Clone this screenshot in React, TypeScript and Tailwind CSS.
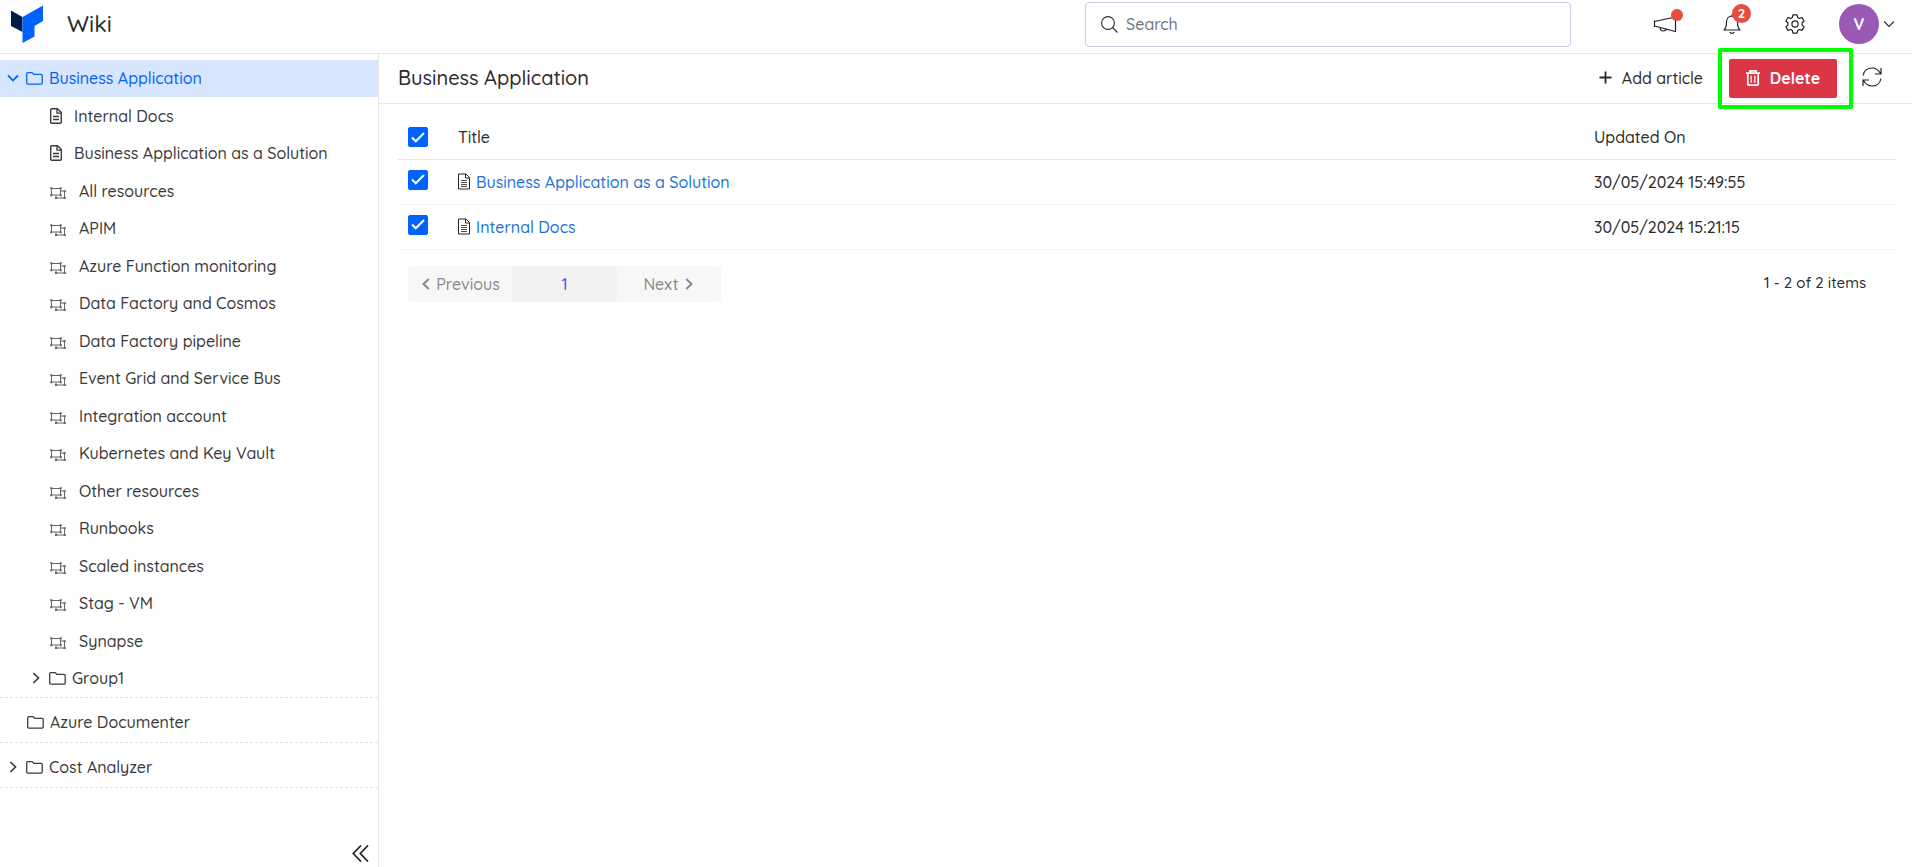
import { useState } from "react";
import type { ReactNode } from "react";

const resources = [
  "All resources",
  "APIM",
  "Azure Function monitoring",
  "Data Factory and Cosmos",
  "Data Factory pipeline",
  "Event Grid and Service Bus",
  "Integration account",
  "Kubernetes and Key Vault",
  "Other resources",
  "Runbooks",
  "Scaled instances",
  "Stag - VM",
  "Synapse",
];

const articles = [
  { title: "Business Application as a Solution", updatedOn: "30/05/2024 15:49:55" },
  { title: "Internal Docs", updatedOn: "30/05/2024 15:21:15" },
];

const Logo = () => (
  <svg width="32" height="38" viewBox="0 0 32 38" aria-hidden="true">
    <path d="M0 5.500 11.500 12V27L0 21Z" fill="#001d47" />
    <path d="M11.500 12 32 .500V16l-8.500 5v10.500L11.500 38Z" fill="#0062ff" />
  </svg>
);

const Chevron = ({ className = "stroke-[1.7]" }: { className?: string }) => (
  <svg width="12" height="12" viewBox="0 0 12 12" fill="none" stroke="currentColor" className={className}>
    <path d="M1 3.300 6 8.500 11 3.300" />
  </svg>
);

const FolderIcon = () => (
  <svg width="17" height="13" viewBox="0 0 17 13" fill="none" stroke="currentColor" className="shrink-0">
    <path
      d="M1.700.700h4.200c.4 0 .7.200.9.500l1 1.200h7.400c.6 0 1 .4 1 1v7.700c0 .6-.4 1-1 1H1.700c-.6 0-1-.4-1-1V1.700c0-.6.4-1 1-1Z"
      strokeWidth="1.300"
    />
  </svg>
);

const DocIcon = () => (
  <svg width="12" height="16" viewBox="0 0 12 16" fill="none" stroke="currentColor" className="shrink-0">
    <path d="M1.700.700h5.800l3.800 3.800v9.800c0 .6-.4 1-1 1H1.700c-.6 0-1-.4-1-1V1.700c0-.6.4-1 1-1Z" strokeWidth="1.400" />
    <path d="M7 1v4.200h4.200" strokeWidth="1.300" />
    <path d="M3 8.500h6M3 11.500h6" strokeWidth="1.300" />
  </svg>
);

const FileIcon = () => (
  <svg width="12" height="17" viewBox="0 0 12 17" fill="none" stroke="#222" className="shrink-0">
    <path d="M.5 1h7.500L11.500 4.500V16H.5Z" />
    <path d="M7.500 1v4h4" />
    <path d="M3 7.500h6M3 9.500h6M3 11.500h6M3 13.500h6" strokeWidth=".8" />
  </svg>
);

const ResourceIcon = () => (
  <svg width="16" height="12" viewBox="0 0 16 12" fill="none" stroke="#666" className="shrink-0">
    <path d="M1.500 1.500h9v6.500h-9Z" />
    <path d="M11 4h3.500v7H6V8.500" />
    <path
      d="M.2.200h2.100v2.100H.2ZM9.700.200h2.100v2.100H9.700ZM.2 7.200h2.100v2.100H.2ZM9.700 7.200h2.100v2.100H9.700ZM13.600 3.200h2.200v1.800H13.600ZM13.600 9.900h2.200v2H13.600ZM5 9.900h2.200v2H5Z"
      fill="#666"
      stroke="none"
    />
  </svg>
);

const SearchIcon = () => (
  <svg width="17" height="17" viewBox="0 0 17 17" fill="none" stroke="#333" className="shrink-0">
    <circle cx="7" cy="7" r="6.400" strokeWidth="1.100" />
    <path d="m11.500 11.500 5 5" strokeWidth="1.300" />
  </svg>
);

const MegaphoneIcon = () => (
  <svg width="24" height="18" viewBox="0 0 24 18" fill="none" stroke="#222" strokeWidth="1.200">
    <path d="M1.500 5.500v6.500M1.500 6.500 22.500 2v14.500L1.500 11M7 12.500c.2 2.300 1.500 3.500 3.300 3.500 1.600 0 2.800-.9 3.300-2" />
  </svg>
);

const BellIcon = () => (
  <svg width="18" height="20" viewBox="0 0 18 20" fill="none" stroke="#222" strokeWidth="1.200">
    <path d="M9 .500v1.700M1 16c1.700-1.500 2.500-3 2.500-8C3.500 4.500 6 2.200 9 2.200S14.500 4.500 14.500 8c0 5 .8 6.500 2.500 8Z" strokeLinejoin="round" />
    <path d="M6.700 18c.5.900 1.300 1.300 2.300 1.300s1.800-.4 2.300-1.300" />
  </svg>
);

const GearIcon = () => (
  <svg width="20" height="20" viewBox="0 0 20 20" fill="none" stroke="#222" strokeWidth="1.200" strokeLinejoin="round">
    <path d="M7.900.8h4.200l.5 2.600 1.800 1 2.600-.9 2.100 3.500-2 1.800v2.300l2 1.800-2.100 3.500-2.600-.9-1.800 1-.5 2.700H7.900l-.5-2.700-1.800-1-2.600.9L.9 12.900l2-1.800V8.800L.9 7 3 3.500l2.600.9 1.800-1Z" />
    <circle cx="10" cy="10" r="3.100" />
  </svg>
);

const RefreshIcon = () => (
  <svg width="20" height="20" viewBox="0 0 20 20" fill="none" stroke="#222" strokeWidth="1.200">
    <path d="M1 8.500C1.800 4 5.500 1 10 1c3.500 0 6.500 2 8.500 5.500M19 1v6h-6" />
    <path d="M19 11.500C18.200 16 14.500 19 10 19c-3.500 0-6.500-2-8.500-5.500M1 19v-6h6" />
  </svg>
);

const TrashIcon = () => (
  <svg width="14" height="16" viewBox="0 0 14 16" fill="none" stroke="currentColor">
    <path d="M0 3.200h14M4 3V.900h6V3M1.800 3.500v10.600c0 .7.400 1 1 1h8.400c.6 0 1-.3 1-1V3.500" strokeWidth="1.700" />
    <path d="M5.200 5.800v7M8.800 5.800v7" strokeWidth="1.300" />
  </svg>
);

const CollapseIcon = () => (
  <svg width="17" height="17" viewBox="0 0 17 17" fill="none" stroke="#222" strokeWidth="1.700">
    <path d="M9 .500 1.300 8.500l7.700 8M16 .500 8.300 8.500l7.700 8" />
  </svg>
);

const Checkbox = ({ label, checked, onChange }: { label: string; checked: boolean; onChange: () => void }) => (
  <span className="grid size-5 place-items-center">
    <input
      type="checkbox"
      aria-label={label}
      checked={checked}
      onChange={onChange}
      className="col-start-1 row-start-1 size-full appearance-none rounded-xs border border-gray-400 checked:border-[#0062ff] checked:bg-[#0062ff]"
    />
    <svg width="14" height="11" viewBox="0 0 14 11" fill="none" stroke="#fff" className="pointer-events-none col-start-1 row-start-1">
      <path d="m1 5.500 3.800 3.800L13 1" strokeWidth="2" />
    </svg>
  </span>
);

const TreeRow = ({ children, className = "" }: { children: ReactNode; className?: string }) => (
  <li className={`flex h-[37px] items-center pl-[50px] even:h-[38px] ${className}`}>{children}</li>
);

const Sidebar = () => (
  <aside className="flex w-[379px] shrink-0 flex-col border-r border-[#e6e6e6] pt-1.5">
    <nav className="font-medium text-[#3a3a3a]">
      <div className="border-b border-dashed border-[#e4e4e4]">
        <a href="#business" className="flex h-[37px] items-center bg-[#d8e5ff] pb-px pl-[7px] text-[#0062ff]">
          <Chevron />
          <span className="ml-[7px] flex items-center gap-1.5">
            <FolderIcon />
            Business Application
          </span>
        </a>
        <ul>
          {["Internal Docs", "Business Application as a Solution"].map((doc) => (
            <TreeRow key={doc}>
              <a href="#doc" className="flex items-center gap-3">
                <DocIcon />
                {doc}
              </a>
            </TreeRow>
          ))}
          {resources.map((name) => (
            <TreeRow key={name}>
              <a href="#resource" className="flex items-end gap-[13px]">
                <span className="pb-1">
                  <ResourceIcon />
                </span>
                {name}
              </a>
            </TreeRow>
          ))}
          <TreeRow className="-ml-5">
            <a href="#group1" className="flex items-center">
              <Chevron className="-rotate-90 stroke-[1.7]" />
              <span className="ml-[7px] flex items-center gap-1.5">
                <FolderIcon />
                Group1
              </span>
            </a>
          </TreeRow>
        </ul>
      </div>
      <a href="#azure" className="flex h-[45px] items-center gap-1.5 border-b border-dashed border-[#e4e4e4] pt-1 pl-[27px]">
        <FolderIcon />
        Azure Documenter
      </a>
      <a href="#cost" className="flex h-[45px] items-center border-b border-dashed border-[#e4e4e4] pt-1 pl-[7px]">
        <Chevron className="-rotate-90 stroke-[1.7]" />
        <span className="ml-[7px] flex items-center gap-1.5">
          <FolderIcon />
          Cost Analyzer
        </span>
      </a>
    </nav>
    <button type="button" aria-label="Collapse sidebar" className="mt-auto mr-[9px] mb-[5px] self-end">
      <CollapseIcon />
    </button>
  </aside>
);

const Header = () => (
  <header className="flex h-[54px] shrink-0 items-center border-b border-[#e6e6e6] pr-[17px] pb-[5px] pl-[11px]">
    <Logo />
    <h1 className="ml-6 text-[23px] leading-7 font-medium">Wiki</h1>
    <label className="ml-auto flex h-[45px] w-[486px] items-center gap-2 rounded-sm border border-[#cfcbe2] pl-[15px]">
      <SearchIcon />
      <input
        type="text"
        aria-label="Search"
        placeholder="Search"
        className="min-w-0 flex-1 font-medium outline-none placeholder:text-[#6c757d]"
      />
    </label>
    <div className="ml-[82px] flex items-center">
      <button type="button" aria-label="Announcements" className="relative">
        <MegaphoneIcon />
        <span className="absolute -top-1.5 -right-1.5 size-3 rounded-full bg-[#e74c3c]" />
      </button>
      <button type="button" aria-label="Notifications" className="relative ml-[46px]">
        <BellIcon />
        <span className="absolute -top-2.5 -right-2.5 size-[19px] rounded-full bg-[#e74c3c] text-[13px] leading-[19px] font-bold text-white">
          2
        </span>
      </button>
      <button type="button" aria-label="Settings" className="ml-11">
        <GearIcon />
      </button>
      <button type="button" aria-label="Account" className="ml-[34px] flex items-center gap-1">
        <span className="size-10 rounded-full bg-[#9b59b6] text-base leading-10 font-bold text-white">V</span>
        <Chevron className="stroke-[1.2]" />
      </button>
    </div>
  </header>
);

const Toolbar = () => (
  <div className="flex h-[50px] items-center border-b border-[#e6e6e6] pr-[30px] pl-[19px]">
    <h2 className="pb-0.5 text-xl leading-7 font-medium">Business Application</h2>
    <button type="button" className="ml-auto flex items-center gap-2.5 pb-0.5 font-medium">
      <svg width="13" height="13" viewBox="0 0 13 13" stroke="currentColor" strokeWidth="1.800">
        <path d="M6.500.500v12M.5 6.500h12" />
      </svg>
      Add article
    </button>
    <div className="relative ml-[26px]">
      <button
        type="button"
        className="flex h-[39px] w-[108px] items-center justify-center gap-2.5 rounded-xs bg-[#dc3545] pb-px font-bold text-white"
      >
        <TrashIcon />
        Delete
      </button>
      <span className="pointer-events-none absolute -top-[11px] -right-4 -bottom-[11px] -left-[11px] rounded-xs border-4 border-[#00ff00]" />
    </div>
    <button type="button" aria-label="Refresh" className="ml-[25px] pb-1">
      <RefreshIcon />
    </button>
  </div>
);

const ArticleTable = () => {
  const [selected, setSelected] = useState<string[]>(articles.map((a) => a.title));
  const allSelected = selected.length === articles.length;

  const toggle = (title: string) =>
    setSelected((prev) => (prev.includes(title) ? prev.filter((t) => t !== title) : [...prev, title]));

  return (
    <table className="w-full table-fixed text-left">
      <thead>
        <tr className="h-[45px] border-b border-[#e6e6e6]">
          <th className="w-[60px] pt-0.5 pl-2.5">
            <Checkbox
              label="Select all"
              checked={allSelected}
              onChange={() => setSelected(allSelected ? [] : articles.map((a) => a.title))}
            />
          </th>
          <th className="pt-0.5 font-medium">Title</th>
          <th className="w-[302px] pt-0.5 font-medium">Updated On</th>
        </tr>
      </thead>
      <tbody className="font-medium">
        {articles.map(({ title, updatedOn }) => (
          <tr key={title} className="h-[45px] border-b border-[#f0f0f0]">
            <td className="pb-1 pl-2.5">
              <Checkbox label={title} checked={selected.includes(title)} onChange={() => toggle(title)} />
            </td>
            <td>
              <a href="#article" className="flex items-center gap-1.5 text-[#1a73d9]">
                <FileIcon />
                {title}
              </a>
            </td>
            <td>{updatedOn}</td>
          </tr>
        ))}
      </tbody>
    </table>
  );
};

const Pagination = () => (
  <div className="mt-4 flex items-center justify-between pr-[30px] pl-2.5 font-medium">
    <div className="flex h-9 overflow-hidden rounded-sm bg-[#f7f7f7] text-[#8a8a8a]">
      <button type="button" disabled className="flex w-[104px] items-center justify-center gap-1">
        <Chevron className="rotate-90 stroke-2" />
        Previous
      </button>
      <button type="button" className="w-[105px] bg-[#f3f2f1] text-[#1f5fff]">
        1
      </button>
      <button type="button" disabled className="flex w-[104px] items-center justify-center gap-1">
        Next
        <Chevron className="-rotate-90 stroke-2" />
      </button>
    </div>
    <p className="text-[15px]">1 - 2 of 2 items</p>
  </div>
);

const App = () => (
  <div className="flex min-h-screen flex-col bg-white font-['Quicksand','Inter',sans-serif] text-base text-[#2b2b2b]">
    <Header />
    <div className="flex flex-1">
      <Sidebar />
      <main className="min-w-0 flex-1">
        <Toolbar />
        <div className="pt-2.5 pr-4 pl-[19px]">
          <ArticleTable />
          <Pagination />
        </div>
      </main>
    </div>
  </div>
);

export default App;
